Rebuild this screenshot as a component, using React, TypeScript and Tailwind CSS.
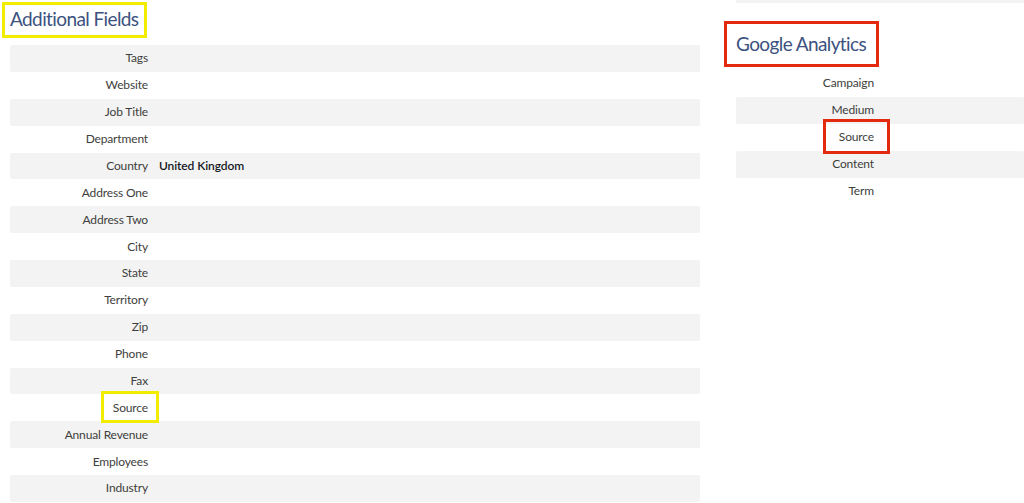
import React from 'react';

type Field = { label: string; value?: string };

const ADDITIONAL: Field[] = [
    { label: 'Tags' },
    { label: 'Website' },
    { label: 'Job Title' },
    { label: 'Department' },
    { label: 'Country', value: 'United Kingdom' },
    { label: 'Address One' },
    { label: 'Address Two' },
    { label: 'City' },
    { label: 'State' },
    { label: 'Territory' },
    { label: 'Zip' },
    { label: 'Phone' },
    { label: 'Fax' },
    { label: 'Source' },
    { label: 'Annual Revenue' },
    { label: 'Employees' },
    { label: 'Industry' },
];

const ANALYTICS: Field[] = [
    { label: 'Campaign' },
    { label: 'Medium' },
    { label: 'Source' },
    { label: 'Content' },
    { label: 'Term' },
];

const FieldRow: React.FC<{ field: Field; striped: boolean }> = ({ field, striped }) => (
    <div className={`flex items-center h-[26.875px] rounded-[2px] ${striped ? 'bg-[#f3f3f3]' : ''}`}>
        <div className="w-[138px] shrink-0 text-right text-[12px] tracking-[-0.15px] text-[#3e3e3c]">{field.label}</div>
        {field.value && (
            <div className="pl-[11px] text-[12px] font-semibold tracking-[-0.1px] text-[#16191f]">{field.value}</div>
        )}
    </div>
);

const App: React.FC = () => {
    return (
        <div className="relative w-[1024px] h-[503px] overflow-hidden bg-white font-['Lato','Open_Sans',sans-serif]">
            <div className="flex gap-[36px] pl-[10px]">
                <div className="w-[690px] shrink-0">
                    <h2 className="h-[45px] pt-[5px] text-[19px] leading-[28px] tracking-[-0.6px] text-[#3c5280]">Additional Fields</h2>
                    {ADDITIONAL.map((f, i) => (
                        <FieldRow key={f.label} field={f} striped={i % 2 === 0} />
                    ))}
                </div>
                <div className="flex-1">
                    <div className="h-[3px] bg-[#f3f3f3]" />
                    <h2 className="h-[67px] pt-[27px] text-[19px] leading-[28px] tracking-[-0.6px] text-[#3c5280]">Google Analytics</h2>
                    {ANALYTICS.map((f, i) => (
                        <FieldRow key={f.label} field={f} striped={i % 2 === 1} />
                    ))}
                </div>
            </div>

            {/* annotation boxes */}
            <div className="absolute left-[2px] top-[2px] w-[145px] h-[36px] border-[3px] border-[#f2ec00]" />
            <div className="absolute left-[101px] top-[391px] w-[58px] h-[32px] border-[3px] border-[#f2ec00]" />
            <div className="absolute left-[724px] top-[21px] w-[155px] h-[46px] border-[3px] border-[#e32a0e]" />
            <div className="absolute left-[823px] top-[119px] w-[67px] h-[35px] border-[3px] border-[#e32a0e]" />
        </div>
    );
};

export default App;
